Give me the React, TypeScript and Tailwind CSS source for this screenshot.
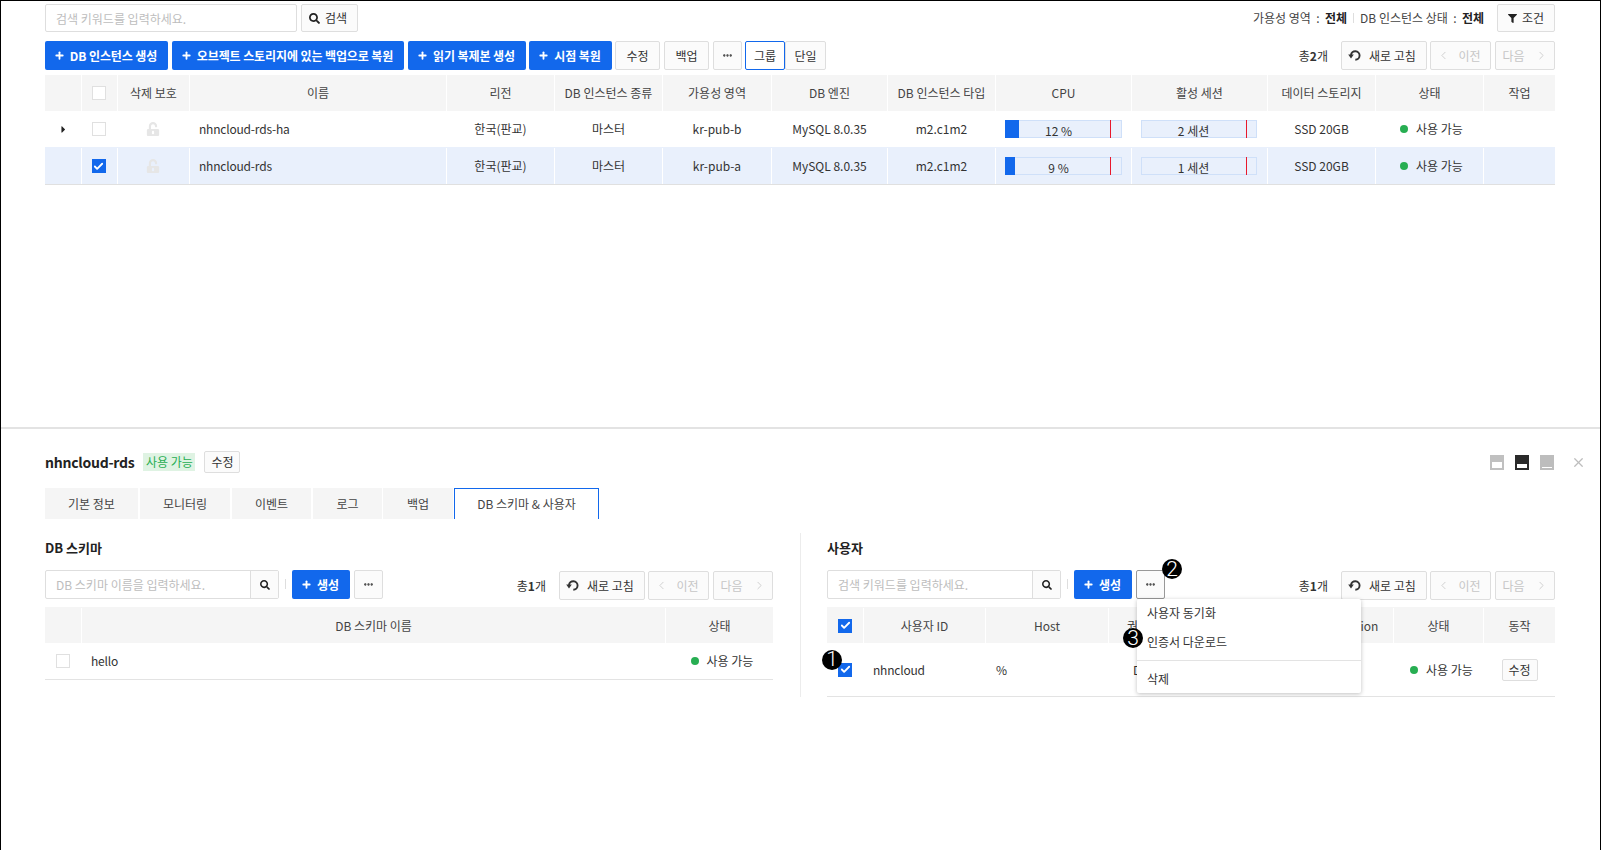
import React from "react";
import { FaSearch, FaFilter, FaUnlockAlt, FaCaretRight } from "react-icons/fa";
import { Plus, Ellipsis, Check, ChevronLeft, ChevronRight, X } from "lucide-react";

const FONT = "font-['Noto_Sans_CJK_KR','Noto_Sans',sans-serif]";

function Btn({ className = "", children }: { className?: string; children: React.ReactNode }) {
  return (
    <button className={`flex items-center justify-center rounded-[2px] border border-[#dedede] bg-[#fbfbfb] text-[12px] text-[#333] ${className}`}>
      {children}
    </button>
  );
}

function Primary({ className = "", children }: { className?: string; children: React.ReactNode }) {
  return (
    <button className={`flex h-[29px] items-center justify-center gap-[5px] rounded-[2px] bg-[#1268ec] pr-[2px] text-[12px] font-bold tracking-[-0.1px] text-white ${className}`}>
      <Plus size={11} strokeWidth={4} />
      <span>{children}</span>
    </button>
  );
}

function Box({ checked = false }: { checked?: boolean }) {
  return checked ? (
    <span className="flex h-[14px] w-[14px] items-center justify-center bg-[#1268ec]">
      <Check size={11} strokeWidth={4} color="#ffffff" />
    </span>
  ) : (
    <span className="block h-[14px] w-[14px] border border-[#e0e0e0] bg-white" />
  );
}

function Status({ className = "" }: { className?: string }) {
  return (
    <span className={`flex items-center gap-[8px] text-[12px] text-[#333] ${className}`}>
      <span className="h-[8px] w-[8px] rounded-full bg-[#27ae52]" />
      사용 가능
    </span>
  );
}

function RefreshIcon() {
  return (
    <svg width="13" height="13" viewBox="0 0 13 13" fill="none">
      <path d="M3 6.2 A4.3 4.3 0 1 1 7.3 10.8" stroke="#333333" strokeWidth="1.9" />
      <path d="M0.2 5.6 H5.8 L3 9.4 Z" fill="#333333" />
    </svg>
  );
}

function Pager({ total }: { total: number }) {
  return (
    <div className="ml-auto flex items-center">
      <span className="mr-[13px] text-[12px] text-[#333]">
        총<b className="font-bold">{total}</b>개
      </span>
      <Btn className="h-[29px] w-[86px] gap-[8px] pr-[4px]">
        <RefreshIcon />
        새로 고침
      </Btn>
      <Btn className="ml-[3px] h-[29px] w-[61px] gap-[8px] pr-[3px] !text-[#c6c6c6]">
        <ChevronLeft size={13} strokeWidth={1.5} />
        이전
      </Btn>
      <Btn className="ml-[4px] h-[29px] w-[60px] gap-[10px] !text-[#c6c6c6]">
        다음
        <ChevronRight size={13} strokeWidth={1.5} />
      </Btn>
    </div>
  );
}

function Usage({ pct, label, width, red, className = "" }: { pct: number; label: string; width: string; red: string; className?: string }) {
  return (
    <div className={`relative h-[18px] border border-[#cfe0f9] bg-[#e9f0fc] ${width} ${className}`}>
      {pct > 0 && <div className="absolute inset-y-[-1px] left-[-1px] bg-[#1268ec]" style={{ width: pct }} />}
      <div className={`absolute inset-y-[-1px] w-px bg-[#e8182c] ${red}`} />
      <div className="absolute inset-x-0 top-[1px] pr-[10px] text-center text-[12px] leading-[18px] text-[#333]">{label}</div>
    </div>
  );
}

const Cell = ({ className = "", children }: { className?: string; children?: React.ReactNode }) => (
  <div className={`flex items-center justify-center border-l border-white first:border-l-0 ${className}`}>{children}</div>
);

const MAIN_COLS = "grid grid-cols-[36px_36px_72px_257px_108px_108px_109px_116px_108px_136px_136px_108px_108px_72px]";
const HEAD = ["", "", "삭제 보호", "이름", "리전", "DB 인스턴스 종류", "가용성 영역", "DB 엔진", "DB 인스턴스 타입", "CPU", "활성 세션", "데이터 스토리지", "상태", "작업"];

function MainRow({ name, zone, cpu, cpuLabel, session, checked, caret, bg }: {
  name: string; zone: string; cpu: number; cpuLabel: string; session: string; checked: boolean; caret: boolean; bg: string;
}) {
  return (
    <div className={`${MAIN_COLS} text-[12px] text-[#333] ${bg}`}>
      <Cell>{caret && <FaCaretRight size={11} color="#222222" />}</Cell>
      <Cell className="pr-[2px]"><Box checked={checked} /></Cell>
      <Cell className="pr-[2px]"><FaUnlockAlt size={14} color="#e6e6e6" /></Cell>
      <Cell className="!justify-start pl-[9px] tracking-[-0.2px]">{name}</Cell>
      <Cell>한국(판교)</Cell>
      <Cell>마스터</Cell>
      <Cell>{zone}</Cell>
      <Cell>MySQL 8.0.35</Cell>
      <Cell>m2.c1m2</Cell>
      <Cell><Usage pct={cpu} label={cpuLabel} width="w-[117px]" red="left-[104px]" /></Cell>
      <Cell><Usage pct={0} label={session} width="w-[116px]" red="left-[104px]" className="-ml-[2px]" /></Cell>
      <Cell>SSD 20GB</Cell>
      <Cell><Status className="ml-[4px]" /></Cell>
      <Cell />
    </div>
  );
}

function Num({ n, className }: { n: number; className: string }) {
  return (
    <span className={`absolute z-20 flex h-[20px] w-[20px] items-center justify-center rounded-full bg-black font-['Roboto',sans-serif] text-[21px] leading-none font-light text-white ${className}`}>
      {n}
    </span>
  );
}

function SearchBox({ placeholder }: { placeholder: string }) {
  return (
    <div className="flex h-[29px] w-[234px] rounded-[2px] border border-[#dedede] bg-white">
      <input
        readOnly
        placeholder={placeholder}
        className="h-full w-[204px] min-w-0 px-[10px] text-[12px] outline-none placeholder:text-[#bdbdbd]"
      />
      <span className="flex flex-1 items-center justify-center border-l border-[#dedede] bg-[#fbfbfb]">
        <FaSearch size={10} color="#222222" />
      </span>
    </div>
  );
}

function PaneIcon({ outer, band }: { outer: string; band: string }) {
  return (
    <span className={`flex h-[15px] w-[14px] flex-col justify-end ${outer}`}>
      <span className={`mx-[2px] mb-[2px] w-[10px] bg-white ${band}`} />
    </span>
  );
}

export default function App() {
  return (
    <div className={`flex h-[850px] w-[1601px] flex-col overflow-hidden border-x border-t border-black bg-white ${FONT} text-[12px] text-[#333]`}>
      {/* upper pane */}
      <div className="h-[426px] shrink-0 pl-[44px] pr-[45px] pt-[3px]">
        <div className="flex h-[29px] items-start">
          <input
            readOnly
            placeholder="검색 키워드를 입력하세요."
            className="h-[28px] w-[252px] rounded-[2px] border border-[#dedede] px-[10px] text-[12px] outline-none placeholder:text-[#bdbdbd]"
          />
          <Btn className="ml-[4px] h-[28px] w-[57px] gap-[5px] pr-[3px]">
            <FaSearch size={11} color="#222222" />
            검색
          </Btn>
          <div className="ml-auto flex h-[28px] items-center">
            <span className="text-[#444]">가용성 영역&nbsp;&nbsp;:&nbsp;&nbsp;<b className="font-bold text-[#222]">전체</b></span>
            <span className="mx-[6px] h-[10px] w-px bg-[#dedede]" />
            <span className="text-[#444]">DB 인스턴스 상태&nbsp;&nbsp;:&nbsp;&nbsp;<b className="font-bold text-[#222]">전체</b></span>
            <Btn className="ml-[13px] h-[28px] w-[58px] gap-[5px]">
              <FaFilter size={9} color="#222222" />
              조건
            </Btn>
          </div>
        </div>

        <div className="mt-[8px] flex h-[29px] items-center">
          <Primary className="w-[123px]">DB 인스턴스 생성</Primary>
          <Primary className="ml-[4px] w-[232px]">오브젝트 스토리지에 있는 백업으로 복원</Primary>
          <Primary className="ml-[4px] w-[118px]">읽기 복제본 생성</Primary>
          <Primary className="ml-[3px] w-[83px]">시점 복원</Primary>
          <Btn className="ml-[3px] h-[29px] w-[45px]">수정</Btn>
          <Btn className="ml-[4px] h-[29px] w-[45px]">백업</Btn>
          <Btn className="ml-[4px] h-[29px] w-[29px]"><Ellipsis size={11} strokeWidth={3} /></Btn>
          <Btn className="ml-[3px] h-[29px] w-[40px] !border-[#1268ec] !bg-white">그룹</Btn>
          <Btn className="h-[29px] w-[41px]">단일</Btn>
          <Pager total={2} />
        </div>

        <div className="mt-[5px]">
          <div className={`${MAIN_COLS} h-[36px] bg-[#f5f5f5] text-[12px] text-[#444]`}>
            {HEAD.map((h, i) => (
              <Cell key={i} className={i === 1 ? "pr-[2px]" : ""}>{i === 1 ? <Box /> : h}</Cell>
            ))}
          </div>
          <div className="h-[36px] [&>div]:h-full">
            <MainRow name="nhncloud-rds-ha" zone="kr-pub-b" cpu={14} cpuLabel="12 %" session="2 세션" checked={false} caret bg="bg-white" />
          </div>
          <div className="h-[37px] bg-[#e9f0fc] pt-[1px] [&>div]:h-full">
            <MainRow name="nhncloud-rds" zone="kr-pub-a" cpu={10} cpuLabel="9 %" session="1 세션" checked caret={false} bg="bg-[#e9f0fc]" />
          </div>
          <div className="h-px bg-[#e0e0e0]" />
        </div>
      </div>

      <div className="h-[2px] shrink-0 bg-[#e3e3e3]" />

      {/* lower pane */}
      <div className="relative flex-1 pl-[44px]">
        <div className="mt-[22px] flex h-[22px] items-center pr-[14px]">
          <span className="text-[14px] font-bold tracking-[-0.25px] text-[#222]">nhncloud-rds</span>
          <span className="ml-[9px] flex h-[18px] w-[52px] items-center justify-center bg-[#dff3e3] text-[12px] text-[#27ae52]">사용 가능</span>
          <Btn className="ml-[9px] h-[22px] w-[36px]">수정</Btn>
          <div className="ml-auto flex items-center">
            <PaneIcon outer="bg-[#c0c0c0]" band="h-[6px]" />
            <span className="w-[11px]" />
            <PaneIcon outer="bg-[#2a2a2a]" band="h-[4px]" />
            <span className="w-[11px]" />
            <PaneIcon outer="bg-[#bdbdbd]" band="h-px" />
            <X size={15} color="#bdbdbd" strokeWidth={2} className="ml-[17px]" />
          </div>
        </div>

        <div className="mt-[15px] flex h-[31px] gap-[2px] text-[12px] text-[#444]">
          <div className="flex w-[93px] items-center justify-center bg-[#f5f5f5]">기본 정보</div>
          <div className="flex w-[90px] items-center justify-center bg-[#f5f5f5]">모니터링</div>
          <div className="flex w-[79px] items-center justify-center bg-[#f5f5f5]">이벤트</div>
          <div className="flex w-[69px] items-center justify-center bg-[#f5f5f5]">로그</div>
          <div className="-ml-px flex w-[70px] items-center justify-center bg-[#f5f5f5]">백업</div>
          <div className="-ml-px flex w-[145px] items-center justify-center border-x border-t border-[#1268ec] bg-white">DB 스키마 &amp; 사용자</div>
        </div>

        <div className="mt-[14px] flex h-[164px]">
          {/* left */}
          <div className="w-[756px] shrink-0 border-r border-[#ececec] pr-[27px]">
            <div className="mt-[7px] h-[16px] text-[13px] leading-[16px] font-bold text-[#222]">DB 스키마</div>
            <div className="mt-[14px] flex h-[30px] items-start">
              <SearchBox placeholder="DB 스키마 이름을 입력하세요." />
              <span className="mx-[6px] mt-[9px] h-[10px] w-px bg-[#dedede]" />
              <Primary className="w-[58px]">생성</Primary>
              <Btn className="ml-[4px] h-[29px] w-[29px]"><Ellipsis size={11} strokeWidth={3} /></Btn>
              <div className="ml-auto mt-px"><Pager total={1} /></div>
            </div>
            <div className="mt-[7px]">
              <div className="grid h-[36px] grid-cols-[36px_584px_108px] bg-[#f5f5f5] pt-px text-[#444]">
                <Cell />
                <Cell>DB 스키마 이름</Cell>
                <Cell>상태</Cell>
              </div>
              <div className="grid h-[37px] grid-cols-[36px_584px_108px] border-b border-[#e3e3e3]">
                <Cell><Box /></Cell>
                <Cell className="!justify-start pl-[9px] tracking-[-0.2px]">hello</Cell>
                <Cell><Status className="ml-[5px]" /></Cell>
              </div>
            </div>
          </div>

          {/* right */}
          <div className="w-[754px] shrink-0 pl-[26px]">
            <div className="mt-[7px] h-[16px] text-[13px] leading-[16px] font-bold text-[#222]">사용자</div>
            <div className="mt-[14px] flex h-[30px] items-start">
              <SearchBox placeholder="검색 키워드를 입력하세요." />
              <span className="mx-[6px] mt-[9px] h-[10px] w-px bg-[#dedede]" />
              <Primary className="w-[58px]">생성</Primary>
              <div className="relative ml-[4px]">
                <Btn className="h-[29px] w-[29px] !border-[#999]"><Ellipsis size={11} strokeWidth={3} /></Btn>
                <Num n={2} className="left-[26px] top-[-11px]" />
                <div className="absolute left-px top-[29px] z-10 h-[94px] w-[224px] rounded-[2px] bg-white text-[12px] text-[#333] shadow-[0_1px_4px_rgba(0,0,0,0.25)]">
                  <div className="flex h-[28px] items-center pl-[10px]">사용자 동기화</div>
                  <div className="flex h-[30px] items-center pl-[10px]">인증서 다운로드</div>
                  <div className="mt-[3px] border-t border-[#e3e3e3]" />
                  <div className="flex h-[32px] items-center pl-[10px] pt-[4px]">삭제</div>
                  <Num n={3} className="left-[-14px] top-[29px]" />
                </div>
              </div>
              <div className="ml-auto mt-px"><Pager total={1} /></div>
            </div>
            <div className="mt-[7px]">
              <div className="grid h-[36px] grid-cols-[36px_122px_123px_84px_109px_92px_90px_72px] bg-[#f5f5f5] pt-px text-[#444]">
                <Cell><Box checked /></Cell>
                <Cell>사용자 ID</Cell>
                <Cell>Host</Cell>
                <Cell>권한 타입</Cell>
                <Cell>인증 플러그인</Cell>
                <Cell>TLS Option</Cell>
                <Cell>상태</Cell>
                <Cell>동작</Cell>
              </div>
              <div className="grid h-[54px] grid-cols-[36px_122px_123px_84px_109px_92px_90px_72px] border-b border-[#e3e3e3]">
                <Cell>
                  <span className="relative">
                    <Box checked />
                    <Num n={1} className="left-[-16px] top-[-13px]" />
                  </span>
                </Cell>
                <Cell className="!justify-start pl-[9px] pt-px tracking-[-0.2px]">nhncloud</Cell>
                <Cell className="!justify-start pl-[10px] pt-px">%</Cell>
                <Cell className="!justify-start pl-[24px] pt-px">DDL</Cell>
                <Cell />
                <Cell />
                <Cell><Status className="ml-[6px]" /></Cell>
                <Cell><Btn className="h-[22px] w-[36px]">수정</Btn></Cell>
              </div>
            </div>
          </div>
        </div>
      </div>
    </div>
  );
}
